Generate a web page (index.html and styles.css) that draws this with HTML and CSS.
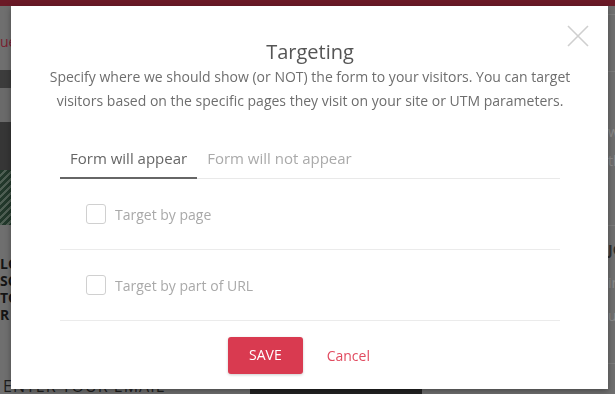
FILE: index.html
```html
<!DOCTYPE html>
<html lang="en">
<head>
  <meta charset="UTF-8">
  <title>Targeting</title>
  <link rel="stylesheet" href="styles.css">
</head>
<body>

  <div class="page">
    <div class="site-top"></div>
    <div class="site-main">
      <div class="site-left">
        <p class="crumb">Continue</p>
        <div class="band band-dark"></div>
        <div class="band band-mid"></div>
        <div class="hero"></div>
        <div class="hero-leaf"></div>
        <div class="promo">
          <span>LOCAL</span>
          <span>SCAN</span>
          <span>TO</span>
          <span>R IN</span>
        </div>
        <p class="email">ENTER YOUR EMAIL</p>
      </div>
      <div class="site-media"></div>
      <div class="site-side">
        <div class="side-row side-first"></div>
        <div class="side-row side-news">
          <span>we</span>
          <span>the</span>
        </div>
        <div class="side-row side-join">
          <span class="side-strong">JOIN</span>
          <span>in</span>
          <span>us</span>
        </div>
        <div class="side-row"></div>
      </div>
    </div>
  </div>

  <div class="overlay">
    <div class="modal">
      <button class="close" aria-label="Close">
        <svg width="22" height="22" viewBox="0 0 22 22">
          <path d="M1 1 L21 21 M21 1 L1 21" stroke="#cfcfcf" stroke-width="1.6" fill="none"/>
        </svg>
      </button>

      <h2 class="title">Targeting</h2>
      <p class="desc">Specify where we should show (or NOT) the form to your visitors. You can target visitors based on the specific pages they visit on your site or UTM parameters.</p>

      <div class="tabs">
        <div class="tab active">Form will appear</div>
        <div class="tab">Form will not appear</div>
      </div>

      <label class="option">
        <span class="check"></span>
        <span>Target by page</span>
      </label>
      <label class="option">
        <span class="check"></span>
        <span>Target by part of URL</span>
      </label>

      <div class="actions">
        <button class="btn-save">SAVE</button>
        <button class="btn-cancel">Cancel</button>
      </div>
    </div>
  </div>

</body>
</html>
```

FILE: styles.css
```css
body {
  margin: 0;
  font-family: 'Open Sans', 'Liberation Sans', sans-serif;
  background: #6f6f6f;
  overflow: hidden;
}

/* page behind the dimmed overlay */
.page {
  height: 394px;
  display: flex;
  flex-direction: column;
}

.site-top {
  height: 6px;
  flex-shrink: 0;
  background: #6b1a27;
}

.site-main {
  flex: 1;
  display: grid;
  grid-template-columns: 250px 172px 1fr;
  min-height: 0;
}

.site-left {
  display: flex;
  flex-direction: column;
  overflow: hidden;
}

.crumb {
  margin: 26px 0 0 -43px;
  font-size: 14px;
  line-height: 20px;
  color: #7a2030;
  white-space: nowrap;
}

.band {
  flex-shrink: 0;
}

.band-dark {
  height: 18px;
  margin-top: 18px;
  background: #3c3c3c;
}

.band-mid {
  height: 34px;
  background: #6a6a6a;
}

.hero {
  height: 48px;
  flex-shrink: 0;
  background: #363636;
}

.hero-leaf {
  height: 55px;
  flex-shrink: 0;
  background: repeating-linear-gradient(135deg, #22382b 0 3px, #4e5e53 3px 5px);
}

.promo {
  display: flex;
  flex-direction: column;
  margin-top: 30px;
  font-size: 14px;
  font-weight: 700;
  line-height: 17px;
  color: #151515;
}

.email {
  margin: 52px 0 0 3px;
  font-size: 16px;
  letter-spacing: 1px;
  color: #1e1e1e;
  white-space: nowrap;
}

.site-media {
  background: #232323;
  margin-top: 382px;
}

.site-side {
  display: flex;
  flex-direction: column;
  padding-left: 186px;
  color: #8a8a8a;
  font-size: 14px;
  overflow: hidden;
}

.side-row {
  display: flex;
  flex-direction: column;
  flex-shrink: 0;
  border-top: 1px solid #7c7c7c;
}

.side-first {
  height: 56px;
  margin-top: 8px;
}

.side-news {
  height: 154px;
  padding-top: 50px;
  gap: 10px;
  box-sizing: border-box;
}

.side-join {
  height: 138px;
  padding-top: 14px;
  gap: 14px;
  box-sizing: border-box;
}

.side-strong {
  color: #2e2e2e;
  font-weight: 700;
}

/* modal */
.overlay {
  position: fixed;
  inset: 0;
  padding: 6px 7px 5px 11px;
  display: flex;
}

.modal {
  position: relative;
  flex: 1;
  background: #ffffff;
  box-shadow: 0 2px 6px rgba(0,0,0,0.35);
  padding: 33px 48px 0 49px;
  color: #666;
}

.close {
  position: absolute;
  top: 19px;
  right: 19px;
  width: 22px;
  height: 22px;
  padding: 0;
  border: none;
  background: none;
  cursor: pointer;
}

.close svg {
  display: block;
}

.title {
  margin: 0;
  text-align: center;
  font-size: 20px;
  font-weight: 400;
  line-height: 26px;
  color: #555;
}

.desc {
  margin: 0 -14px;
  text-align: center;
  font-size: 14px;
  line-height: 24px;
  color: #6e6e6e;
}

.tabs {
  display: flex;
  margin-top: 23px;
  border-bottom: 1px solid #e9e9e9;
}

.tab {
  padding: 11px 10px 8px;
  font-size: 15px;
  line-height: 22px;
  color: #aaa;
  border-bottom: 2px solid transparent;
  margin-bottom: -1px;
  cursor: pointer;
}

.tab.active {
  color: #666;
  border-bottom-color: #666;
}

.option {
  display: flex;
  align-items: center;
  gap: 9px;
  height: 70px;
  padding-left: 26px;
  border-bottom: 1px solid #ebebeb;
  font-size: 14px;
  color: #a9a9a9;
  cursor: pointer;
}

.check {
  width: 18px;
  height: 18px;
  border: 1px solid #d0d0d0;
  border-radius: 3px;
}

.actions {
  display: flex;
  justify-content: center;
  align-items: center;
  padding-top: 16px;
}

.btn-save {
  font-family: inherit;
  font-size: 14px;
  line-height: 20px;
  padding: 8px 21px 9px;
  background: #d93a50;
  color: #fff;
  border: none;
  border-radius: 3px;
  box-shadow: 0 1px 3px rgba(0,0,0,0.2);
  cursor: pointer;
}

.btn-cancel {
  font-family: inherit;
  font-size: 14px;
  line-height: 20px;
  padding: 8px 22px 8px 18px;
  margin-left: 6px;
  background: none;
  border: none;
  color: #e14b60;
  cursor: pointer;
}
```
